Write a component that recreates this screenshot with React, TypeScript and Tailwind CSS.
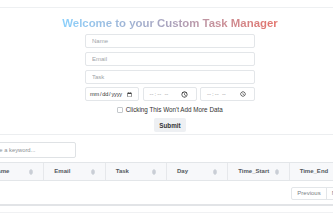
const columns = ['Name', 'Email', 'Task', 'Day', 'Time_Start', 'Time_End']

const SortIcon = () => (
  <svg width="4" height="6" viewBox="0 0 4 6" className="text-gray-400">
    <path d="M2 0.5 L3.5 2.3 H0.5 Z" fill="none" stroke="currentColor" strokeWidth="0.6" />
    <path d="M2 5.5 L3.5 3.7 H0.5 Z" fill="none" stroke="currentColor" strokeWidth="0.6" />
  </svg>
)

const App = () => {
  return (
    <div className="min-h-screen overflow-hidden bg-white font-['Liberation_Sans',Arial,sans-serif] text-[#212529]">
      <div className="h-[8px] border-b border-[#eef0f2]" />

      <div className="pl-[7px]">
        <h1 className="mt-[9px] text-center text-[11.4px] font-bold leading-[13px]">
          <span className="bg-gradient-to-r from-[#8ad0fc] via-[#a9a2bc] to-[#e4726a] bg-clip-text text-transparent">
            Welcome to your Custom Task Manager
          </span>
        </h1>

        <form className="mx-auto mt-[4px] flex w-[170px] flex-col gap-[3.8px]">
          <input
            placeholder="Name"
            className="h-[14px] rounded-[2px] border border-[#e3e6e9] px-[6px] text-[6px] outline-none placeholder:text-[#a0a4a8]"
          />
          <input
            placeholder="Email"
            className="h-[14px] rounded-[2px] border border-[#e3e6e9] px-[6px] text-[6px] outline-none placeholder:text-[#a0a4a8]"
          />
          <input
            placeholder="Task"
            className="h-[14px] rounded-[2px] border border-[#e3e6e9] px-[6px] text-[6px] outline-none placeholder:text-[#a0a4a8]"
          />
          <div className="flex gap-[3.5px]">
            <input
              type="date"
              className="h-[14px] w-[54px] min-w-0 rounded-[2px] border border-[#e3e6e9] px-[3px] text-[5.6px] tracking-[-0.2px] text-[#333] outline-none"
            />
            <input
              type="time"
              className="h-[14px] w-[54px] min-w-0 rounded-[2px] border border-[#e3e6e9] px-[5px] text-[6px] text-[#999] outline-none"
            />
            <input
              type="time"
              className="h-[14px] w-[55px] min-w-0 rounded-[2px] border border-[#e3e6e9] px-[5px] text-[6px] text-[#999] outline-none"
            />
          </div>
          <label className="flex items-center justify-center gap-[3px] text-[6.3px] text-[#333]">
            <span className="h-[5.5px] w-[5.5px] rounded-[1px] border border-[#c4c8cc]" />
            Clicking This Won't Add More Data
          </label>
          <div className="flex justify-center">
            <button
              type="button"
              className="h-[14px] w-[32px] rounded-[2px] bg-[#eef0f3] text-[6.3px] font-bold text-[#333]"
            >
              Submit
            </button>
          </div>
        </form>
      </div>

      <div className="mt-[2px] border-b border-[#eceef0]" />

      <div className="flex justify-center">
        <div className="w-[367px] shrink-0">
          <input
            placeholder="Type a keyword..."
            className="mt-[5px] h-[16px] w-[93px] rounded-[2px] border border-[#dfe2e5] px-[6px] text-[5.8px] outline-none placeholder:text-[#8a8f94]"
          />
          <div className="mt-[3px] flex h-[19px] border-y border-[#e3e6e9] bg-[#f7f8fa]">
            {columns.map((c) => (
              <div
                key={c}
                className="flex flex-1 items-center justify-between border-r border-[#e6e8eb] pl-[10px] pr-[10px] text-[6px] font-bold text-[#54595e] last:border-r-0"
              >
                <span>{c}</span>
                <SortIcon />
              </div>
            ))}
          </div>
          <div className="mt-[6px] flex justify-end">
            <div className="flex h-[13px] overflow-hidden rounded-[2px] border border-[#e3e6e9] text-[6px] text-[#7a8086]">
              <span className="flex items-center border-r border-[#e3e6e9] px-[5px]">Previous</span>
              <span className="flex items-center px-[5px]">Next</span>
            </div>
          </div>
          <div className="mt-[4px]" />
        </div>
      </div>
      <div className="border-b-2 border-[#e2e4e7]" />
      <div className="mt-[6px] border-b border-[#f0f1f3]" />
    </div>
  )
}

export default App
